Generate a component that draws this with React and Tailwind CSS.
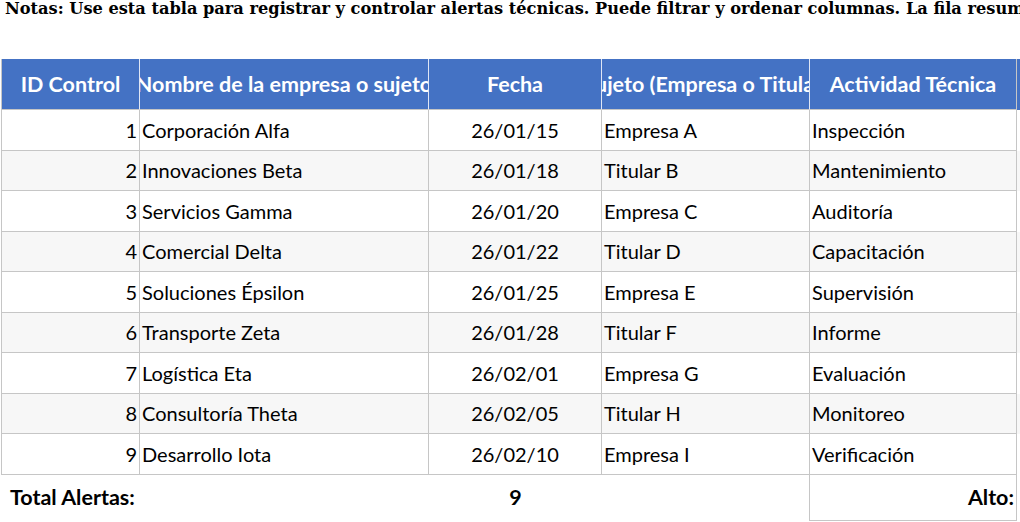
import React from 'react';

const rows = [
  { id: 1, nombre: 'Corporación Alfa', fecha: '26/01/15', sujeto: 'Empresa A', actividad: 'Inspección' },
  { id: 2, nombre: 'Innovaciones Beta', fecha: '26/01/18', sujeto: 'Titular B', actividad: 'Mantenimiento' },
  { id: 3, nombre: 'Servicios Gamma', fecha: '26/01/20', sujeto: 'Empresa C', actividad: 'Auditoría' },
  { id: 4, nombre: 'Comercial Delta', fecha: '26/01/22', sujeto: 'Titular D', actividad: 'Capacitación' },
  { id: 5, nombre: 'Soluciones Épsilon', fecha: '26/01/25', sujeto: 'Empresa E', actividad: 'Supervisión' },
  { id: 6, nombre: 'Transporte Zeta', fecha: '26/01/28', sujeto: 'Titular F', actividad: 'Informe' },
  { id: 7, nombre: 'Logística Eta', fecha: '26/02/01', sujeto: 'Empresa G', actividad: 'Evaluación' },
  { id: 8, nombre: 'Consultoría Theta', fecha: '26/02/05', sujeto: 'Titular H', actividad: 'Monitoreo' },
  { id: 9, nombre: 'Desarrollo Iota', fecha: '26/02/10', sujeto: 'Empresa I', actividad: 'Verificación' },
];

const headers = ['ID Control', 'Nombre de la empresa o sujeto', 'Fecha', 'Sujeto (Empresa o Titular)', 'Actividad Técnica'];

const cols = 'grid grid-cols-[139px_289px_173px_208px_207px]';

const App = () => {
  return (
    <div className="w-[1020px] h-[522px] overflow-hidden bg-white font-['Lato','Liberation_Sans',sans-serif]">
      <p className="pl-[5px] h-[59px] whitespace-nowrap font-['DejaVu_Serif',serif] font-bold text-[16.2px] leading-[18px] text-black">
        Notas: Use esta tabla para registrar y controlar alertas técnicas. Puede filtrar y ordenar columnas. La fila resumen muestra el total.
      </p>

      <div className="pl-px">
        <div className={`${cols} h-[51px] bg-[#4472c4]`}>
          {headers.map((h, i) => (
            <div
              key={h}
              className={`flex items-center justify-center overflow-hidden whitespace-nowrap text-white font-bold text-[21.5px] border-b border-[#c6c6c6] ${i === 0 ? 'border-l border-l-[#c6c6c6]' : ''} ${i < 4 ? 'border-r border-r-[#dfe6f5]' : 'border-r border-r-[#c6c6c6]'}`}
            >
              {h}
            </div>
          ))}
        </div>

        {rows.map((r, idx) => (
          <div key={r.id} className={`${cols} h-[40.5px] text-[20px] text-black ${idx % 2 === 1 ? 'bg-[#f7f7f7]' : 'bg-white'}`}>
            <div className="flex items-center justify-end pr-[2px] border-l border-r border-b border-[#c6c6c6]">{r.id}</div>
            <div className="flex items-center pl-[2px] border-r border-b border-[#c6c6c6] whitespace-nowrap overflow-hidden">{r.nombre}</div>
            <div className="flex items-center justify-center border-r border-b border-[#c6c6c6]">{r.fecha}</div>
            <div className="flex items-center pl-[2px] border-r border-b border-[#c6c6c6]">{r.sujeto}</div>
            <div className="flex items-center pl-[2px] border-r border-b border-[#c6c6c6]">{r.actividad}</div>
          </div>
        ))}

        <div className={`${cols} h-[46px] text-[21.5px] font-bold text-black`}>
          <div className="flex items-center pl-[9px] whitespace-nowrap">Total Alertas:</div>
          <div></div>
          <div className="flex items-center justify-center">9</div>
          <div></div>
          <div className="flex items-center justify-end pr-[2px] border-l border-r border-b border-[#c6c6c6] -ml-px">Alto:</div>
        </div>
      </div>
    </div>
  );
};

export default App;
